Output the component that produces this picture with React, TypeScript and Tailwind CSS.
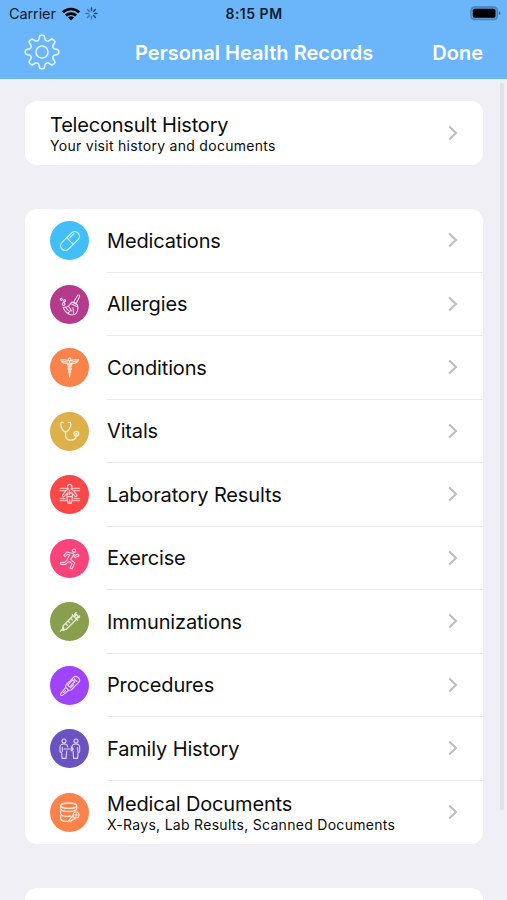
import type { ReactNode } from "react";

type Row = { label: string; note?: string; color: string; icon: ReactNode };

const rows: Row[] = [
  {
    label: "Medications",
    color: "bg-[#42bff8]",
    icon: (
      <g transform="rotate(-45 60 60)">
        <rect x="26" y="46" width="68" height="28" rx="14" />
        <path d="M60 46v28M66 53h18" />
      </g>
    ),
  },
  {
    label: "Allergies",
    color: "bg-[#b53a8c]",
    icon: (
      <>
        <path d="M83 31q5-3 6 3L79 55l-8-4zM66 51l16 8 2 8-23-12zM61 56c-5 9-12 12-22 10 4 12 15 22 27 24 10 0 17-8 18-22M47 68l8 8M57 66l8 12M69 68l2 18M54 84l8-7" />
        <circle cx="34" cy="43" r="3" />
        <circle cx="44" cy="47" r="3" />
        <circle cx="41" cy="57" r="4" />
      </>
    ),
  },
  {
    label: "Conditions",
    color: "bg-[#f9834a]",
    icon: (
      <>
        <circle cx="59" cy="34" r="4" />
        <path d="M55 39C48 32 40 36 32 35c3 7 9 11 17 11h7M63 39c7-7 15-3 23-4-3 7-9 11-17 11h-7M37 39l15 3M81 39l-15 3" />
        <path d="M59 40v47M52 49c4-4 13 0 12 5s-11 4-10 9 9 3 8 8-6 4-4 8M66 49c-4-4-13 0-12 5s11 4 10 9-9 3-8 8 6 4 4 8" strokeWidth="4" />
      </>
    ),
  },
  {
    label: "Vitals",
    color: "bg-[#ddb04a]",
    icon: (
      <>
        <path d="M39 31h-5c-5 8 2 22 8 27q5 4 10 0c7-6 13-18 9-27h-5M47 60v12c0 16 31 16 31 1" strokeWidth="4" />
        <circle cx="79" cy="65" r="7" strokeWidth="4" />
        <circle cx="79" cy="65" r="2" />
      </>
    ),
  },
  {
    label: "Laboratory Results",
    color: "bg-[#fb4748]",
    icon: (
      <>
        <path d="M30 40h22M66 40h23M30 47h16M73 47h16M30 71h16M72 71h17M30 77h21M67 77h22" strokeOpacity=".6" />
        <path d="M55 42l-3-7q1-7 7-7t7 7l-3 7 8 5 10 15-4 4-10-11v12l-3 18h-4l-1-11-1 11h-4l-3-18V55L41 66l-4-4 10-15zM59 45v14M53 51l12 4M53 58l12-5M52 65h14" />
      </>
    ),
  },
  {
    label: "Exercise",
    color: "bg-[#f9437b]",
    icon: (
      <>
        <circle cx="72" cy="35" r="5" />
        <path d="M66 43l-15-4-10 10 4 4 8-7 6 2-9 16-6 6H32v6h15l10-9 9 7-6 13 6 3 8-18-12-11 8-12 6 7 11-6-3-5-7 4z" />
      </>
    ),
  },
  {
    label: "Immunizations",
    color: "bg-[#8a9f4e]",
    icon: (
      <>
        <path d="M31 88l10-12M35 84l7 1" />
        <path d="M39 72l30-31 11 11-31 30H39zM67 38l16 16M73 44l6-6M79 49l6-6M75 34l13 12M74 38l4-6M84 48l5-6M62 49l5 5M54 57l5 5M47 65l5 5" strokeWidth="4" />
      </>
    ),
  },
  {
    label: "Procedures",
    color: "bg-[#a044fb]",
    icon: (
      <g transform="rotate(-45 60 60)">
        <path d="M24 56l24-2 6-5h31c14 0 14 22 0 22H54l-6-5-24-2q-5-4 0-8zM48 54v12M57 53h22v8H57zM84 54v12M31 60h10M57 65h14" />
      </g>
    ),
  },
  {
    label: "Family History",
    color: "bg-[#6a52c1]",
    icon: (
      <>
        <circle cx="42" cy="36" r="6" />
        <circle cx="78" cy="36" r="6" />
        <path d="M53 54c0-7-4-9-11-9s-12 2-12 10v13l5 3 1 17h12l2-22M66 54c0-7 5-9 12-9s11 2 11 10v13l-5 3-1 17H71l-2-22M42 60h27M63 54l7 6-7 6M37 55v12M83 55v12" />
      </>
    ),
  },
  {
    label: "Medical Documents",
    note: "X-Rays, Lab Results, Scanned Documents",
    color: "bg-[#fb834b]",
    icon: (
      <>
        <ellipse cx="56" cy="38" rx="24" ry="8" strokeWidth="4" />
        <path d="M32 38v10c4 10 44 10 48 0V38M32 54v8c3 7 16 9 30 7M32 68v9c3 8 16 9 27 8M72 65L56 83l8 1 4-5 5-1 5-6" strokeWidth="4" />
        <circle cx="78" cy="66" r="9" />
        <circle cx="79" cy="65" r="2" />
      </>
    ),
  },
];

function Chevron() {
  return (
    <svg className="ml-auto mr-[25px] h-[16px] w-[10px] shrink-0" viewBox="0 0 10 16" fill="none" stroke="#bdbdc1" strokeWidth="2.1">
      <path d="M1.2 1.4 8 8l-6.800 6.600" />
    </svg>
  );
}

function Gear() {
  const points = Array.from({ length: 96 }, (_, i) => {
    const a = (i / 96) * Math.PI * 2;
    const wave = Math.cos(a * 8);
    const r = 14.4 + 2.3 * Math.tanh(2.4 * wave) / Math.tanh(2.4);
    return `${(18 + r * Math.cos(a)).toFixed(2)},${(18 + r * Math.sin(a)).toFixed(2)}`;
  }).join(" ");
  return (
    <svg className="size-[36px]" viewBox="0 0 36 36" fill="none" stroke="#e8f5ff" strokeWidth="1.5" strokeLinejoin="round">
      <polygon points={points} />
      <circle cx="18" cy="18" r="6" />
    </svg>
  );
}

function StatusBar() {
  return (
    <div className="grid h-[27px] grid-cols-3 items-center pl-[9px] pr-[6px] text-[#0b1c2b]">
      <div className="flex items-center">
        <span className="w-[47px] whitespace-nowrap text-[14.500px] tracking-[-0.1px]">Carrier</span>
        <svg className="ml-[6px] h-[14px] w-[18px]" viewBox="0 0 18 14" fill="none" stroke="#000" strokeWidth="2.7">
          <path d="M.9 5.300a11.600 11.600 0 0 1 16.200 0M3.900 8.600a7.400 7.400 0 0 1 10.200 0" />
          <path d="M6 10.600a4.400 4.400 0 0 1 6 0l-3 3z" fill="#000" stroke="none" />
        </svg>
        <svg className="ml-[5px] size-[13px]" viewBox="0 0 13 13" stroke="#1c4566" strokeWidth="1.400" strokeLinecap="round">
          <path d="M6.500 1v2.500M10.400 2.600 8.600 4.400M12 6.500H9.500M10.400 10.400 8.600 8.600" />
          <path d="M6.500 12V9.500M2.600 10.400l1.800-1.800M1 6.500h2.500M2.600 2.600l1.800 1.800" opacity=".55" />
        </svg>
      </div>
      <span className="-ml-[2px] text-center text-[14px] font-semibold tracking-[0.5px]">8:15 PM</span>
      <svg className="h-[15px] w-[31px] justify-self-end" viewBox="0 0 31 15">
        <rect x=".9" y="1" width="26.500" height="12.600" rx="3.600" fill="#5a9bd6" stroke="#4a84b6" strokeWidth="1.300" />
        <rect x="2.800" y="2.800" width="22.700" height="9" rx="1.800" />
        <path d="M28.800 5.100q3 2.200 0 4.400z" fill="#3d719c" />
      </svg>
    </div>
  );
}

export default function App() {
  return (
    <div className="relative h-[900px] w-[507px] overflow-hidden bg-[#f0eff5] font-[Inter,sans-serif] text-[#0c0c0c]">
      <header className="h-[79px] bg-[#6bb6fb]">
        <StatusBar />
        <div className="flex h-[50px] items-center pl-[24px] pr-[24px] text-[20px] font-semibold text-white">
          <Gear />
          <h1 className="ml-[75px] whitespace-nowrap pt-px text-[20px] tracking-[0.04px]">Personal Health Records</h1>
          <button className="ml-auto pt-px text-[20px]">Done</button>
        </div>
      </header>
      <main className="px-[25px] pt-[22px]">
        <section className="flex h-[63.5px] w-[458px] items-center rounded-[12px] bg-white pl-[25px]">
          <div className="pt-[2px]">
            <div className="text-[20px] leading-[23px] tracking-[-0.2px]">Teleconsult History</div>
            <div className="text-[14px] leading-[17px] tracking-[0.29px]">Your visit history and documents</div>
          </div>
          <Chevron />
        </section>
        <section className="mt-[44.5px] w-[458px] rounded-[12px] bg-white">
          {rows.map((row, i) => (
            <div key={row.label} className="flex h-[63.5px] items-center pl-[25px]">
              <span className={`size-[39px] shrink-0 rounded-full ${row.color}`}>
                <svg className="size-[39px]" viewBox="0 0 117 117" fill="none" stroke="#fff" strokeOpacity=".78" strokeWidth="3.3" strokeLinejoin="round" strokeLinecap="round">
                  {row.icon}
                </svg>
              </span>
              <div className={`ml-[18px] flex h-full flex-1 items-center ${i < rows.length - 1 ? "border-b border-[#e9e9eb]" : ""}`}>
                <div className="whitespace-nowrap pt-[2px]">
                  <div className="text-[20px] leading-[23px] tracking-[-0.15px]">{row.label}</div>
                  {row.note && <div className="text-[14px] leading-[17px] tracking-[0.29px]">{row.note}</div>}
                </div>
                <Chevron />
              </div>
            </div>
          ))}
        </section>
        <section className="mt-[44px] h-[63px] w-[458px] rounded-[12px] bg-white" />
      </main>
      <div className="absolute right-[3px] top-[83px] h-[727px] w-[4px] rounded-full bg-[#e2e1e7]" />
    </div>
  );
}
